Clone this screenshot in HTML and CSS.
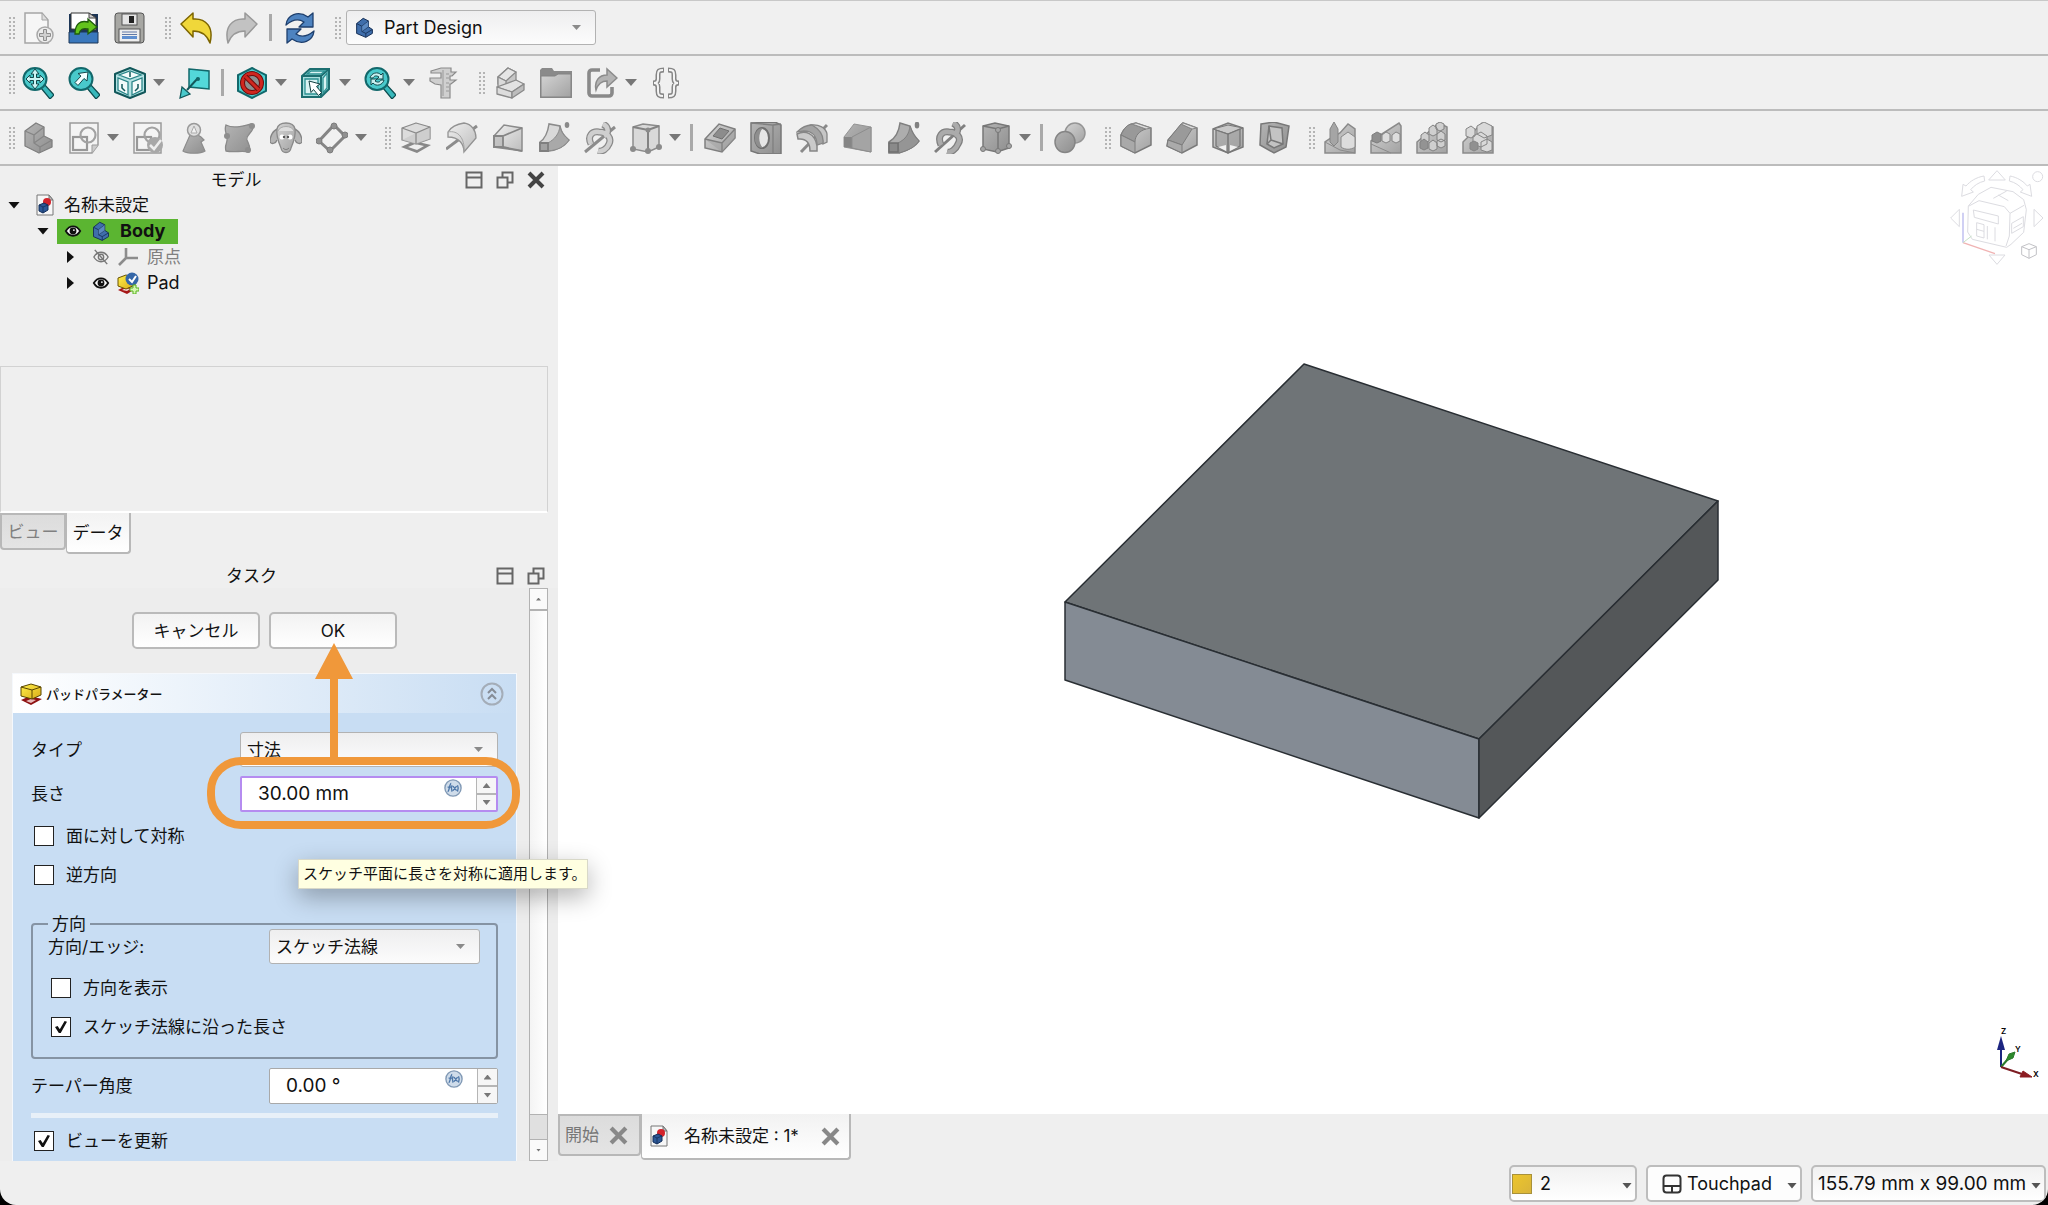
FILE: index.html
```html
<!DOCTYPE html>
<html lang="ja">
<head>
<meta charset="utf-8">
<title>名称未設定 - Part Design</title>
<link rel="stylesheet" href="styles.css">
</head>
<body>
<svg class="sprite" aria-hidden="true">
  <defs>
    <linearGradient id="g-gray" x1="0" y1="0" x2="1" y2="1"><stop offset="0" stop-color="#d4d4d4"/><stop offset="1" stop-color="#a2a2a2"/></linearGradient>
    <linearGradient id="g-light" x1="0" y1="0" x2="1" y2="1"><stop offset="0" stop-color="#efefef"/><stop offset="1" stop-color="#bdbdbd"/></linearGradient>
    <linearGradient id="g-dark" x1="0" y1="0" x2="1" y2="1"><stop offset="0" stop-color="#b4b4b4"/><stop offset="1" stop-color="#8f8f8f"/></linearGradient>
    <linearGradient id="g-yellow" x1="0" y1="0" x2="1" y2="1"><stop offset="0" stop-color="#fff04a"/><stop offset="1" stop-color="#d9ab18"/></linearGradient>
  </defs>

  <symbol id="i-new" viewBox="0 0 32 32"><path d="M3 1h17l6 7v23H3z" fill="#f6f6f6" stroke="#a5a5a5" stroke-width="1.500"/><path d="M20 1v7h6z" fill="#ddd" stroke="#a5a5a5"/><circle cx="23" cy="23" r="8" fill="#ececec" stroke="#a8a8a8" stroke-width="1.500"/><path d="M21.500 17.500h3v4h4v3h-4v4h-3v-4h-4v-3h4z" fill="#d0d0d0" stroke="#8e8e8e"/></symbol>
  <symbol id="i-open" viewBox="0 0 32 32"><path d="M1 2h29v29H1z" fill="#1d3657"/><path d="M3 17V1h18l7 5v12z" fill="#fff" stroke="#333"/><path d="M21 1v5h7z" fill="#ccc" stroke="#444"/><path d="M1 20h29v11H1z" fill="#3a78bd" stroke="#1d3657"/><path d="M7 22C7 12 12 8 20 10V7l9 8-9 7v-5c-5-1-8 0-9 5z" fill="#63c31c" stroke="#1f5c0b" stroke-width="1.300"/></symbol>
  <symbol id="i-save" viewBox="0 0 32 32"><rect x="1" y="1" width="29" height="30" rx="3" fill="#a7a7a3" stroke="#555"/><rect x="8" y="2" width="15" height="11" fill="#e4e4e4" stroke="#555"/><rect x="15" y="4" width="5" height="7" fill="#222"/><rect x="5" y="17" width="21" height="13" fill="#eee" stroke="#555"/><path d="M8 20h15M8 22.500h15" stroke="#6079a8" stroke-width="1.200"/><path d="M8 24h15v3H8z" fill="#5f8fd0"/></symbol>
  <symbol id="i-undo" viewBox="0 0 32 32"><path d="M1 12 13 1v6c13-1 21 8 17 24-3-8-8-12-17-12v6z" fill="#f0d73a" stroke="#7d6500" stroke-width="1.500" stroke-linejoin="round"/></symbol>
  <symbol id="i-redo" viewBox="0 0 32 32"><path d="M31 12 19 1v6C6 6-2 15 2 31c3-8 8-12 17-12v6z" fill="#c2c2c2" stroke="#999" stroke-width="1.500" stroke-linejoin="round"/></symbol>
  <symbol id="i-refresh" viewBox="0 0 32 32"><path d="M2 13C3 3 14-2 24 5l5-4v14H15l5-5C14 6 8 8 2 13z" fill="#4e83c0" stroke="#1e3f6d" stroke-width="1.300" stroke-linejoin="round"/><path d="M30 19C29 29 18 34 8 27l-5 4V17h14l-5 5c6 4 12 2 18-3z" fill="#4e83c0" stroke="#1e3f6d" stroke-width="1.300" stroke-linejoin="round"/></symbol>

  <symbol id="i-body" viewBox="0 0 32 32"><path d="M4 10 14 2l8 4v9l6 4v6L18 31 4 25z" fill="#3f6eab" stroke="#152f55" stroke-width="1.500" stroke-linejoin="round"/><path d="m4 10 8 4v8l6 3 10-6M12 14l10-8M12 22l10-7M18 25v6" fill="none" stroke="#152f55" stroke-width="1.300"/><path d="m12 14 10-8v9l-10 7z" fill="#78a3d8" fill-opacity=".5"/></symbol>
  <symbol id="i-body-gray" viewBox="0 0 32 32"><path d="M3 9 14 1l8 4v9l8 4v7L17 31 3 24z" fill="url(#g-dark)" stroke="#7f7f7f" stroke-width="1.300" stroke-linejoin="round"/><path d="m3 9 9 4v8l6 4 12-7M12 13l10-8M12 21l10-7M18 25v6" fill="none" stroke="#858585" stroke-width="1.300"/></symbol>
  <symbol id="i-part-gray" viewBox="0 0 32 32"><g stroke="#8a8a8a" stroke-width="1.300" stroke-linejoin="round"><path d="M4 10 14 1l8 4v9l-10 6-8-3z" fill="#c6c6c6"/><path d="m4 10 10-9 8 4-10 9z" fill="#e6e6e6"/><path d="M4 10v10l8 2v-8z" fill="#dadada"/><path d="m3 20 19-7 8 4-12 8z" fill="#e2e2e2"/><path d="m3 20 15 5v6L3 27z" fill="#dcdcdc"/><path d="m18 25 12-8v6l-12 8z" fill="#bdbdbd"/></g></symbol>

  <symbol id="i-fit" viewBox="0 0 32 32"><path d="m19 21 4-3 9 10-4 4z" fill="#38b8bb" stroke="#0e4d50" stroke-width="1.200"/><ellipse cx="13" cy="12" rx="11.500" ry="11" fill="#49c9cb" stroke="#12686b" stroke-width="2"/><path d="m13 2 4 5h-2.500v3.500H18V8l4 4-4 4v-2.500h-3.500V17H17l-4 5-4-5h2.500v-3.500H8V16l-4-4 4-4v2.500h3.500V7H9z" fill="#cdf4f4" stroke="#12484b"/></symbol>
  <symbol id="i-fitsel" viewBox="0 0 32 32"><path d="m19 21 4-3 9 10-4 4z" fill="#38b8bb" stroke="#0e4d50" stroke-width="1.200"/><ellipse cx="13" cy="12" rx="11.500" ry="11" fill="#49c9cb" stroke="#12686b" stroke-width="2"/><path d="m20 5-1 9-3-2.500-6 7-3-3 6-6.500-3-2.500z" fill="#f2ffff" stroke="#12484b"/></symbol>
  <symbol id="i-cube" viewBox="0 0 32 32"><path d="M1 7 16 1l15 6v18l-15 6-15-6z" fill="#b5e3e4" stroke="#12585b" stroke-width="2" stroke-linejoin="round"/><path d="m5 8 11 4 11-4-11-4zM4 11v12l10 5V15zM28 11v12l-10 5V15z" fill="#f3fbfb" stroke="#2a8588" stroke-width="1.300"/><path d="M16 5v5M8 17v4l3 3M24 17v4l-3 3" fill="none" stroke="#12585b" stroke-width="1.500"/></symbol>
  <symbol id="i-align" viewBox="0 0 32 32"><path d="m11 2 20 2v18l-20-2z" fill="#53d8da" stroke="#12686b" stroke-width="1.500"/><path d="m20 11-11 12" stroke="#12585b" stroke-width="2"/><path d="m2 31 2-11 8 7z" fill="#49c9cb" stroke="#12585b" stroke-width="1.300"/><circle cx="20" cy="12" r="2" fill="#12686b"/></symbol>
  <symbol id="i-drawstyle" viewBox="0 0 32 32"><path d="m16 1 14 7v16l-14 7-14-7V8z" fill="#4fd0d2" stroke="#12686b" stroke-width="2"/><circle cx="16" cy="16" r="9.500" fill="#8c8f8f" stroke="#6d0d0d" stroke-width="5"/><circle cx="16" cy="16" r="9.500" fill="none" stroke="#d0261f" stroke-width="3"/><path d="m9.500 9.500 13 13" stroke="#6d0d0d" stroke-width="5"/><path d="m9.500 9.500 13 13" stroke="#d0261f" stroke-width="3"/></symbol>
  <symbol id="i-bbox" viewBox="0 0 32 32"><path d="M2 9 10 2h19v20l-8 8H2z" fill="#a9dede" stroke="#1c6e70" stroke-width="2"/><path d="M2 9h19v21M21 9l8-7" fill="none" stroke="#1c6e70" stroke-width="2"/><path d="M5 12h13v15H5zM23 11l4-5v15l-4 5zM11 4h14l-4 3H7z" fill="#d9f3f3" stroke="#2b9193" stroke-width="1.300"/><path d="m9 14 11 3-3.500 2.500 5 6-3 3-5-6-2.500 3z" fill="#fff" stroke="#123f41"/></symbol>
  <symbol id="i-view" viewBox="0 0 32 32"><path d="m19 21 4-3 9 10-4 4z" fill="#38b8bb" stroke="#0e4d50" stroke-width="1.200"/><ellipse cx="13" cy="12" rx="11.500" ry="11" fill="#49c9cb" stroke="#12686b" stroke-width="2"/><path d="M6 11c1-5 8-7 11-3l2-2v6h-6l2-2c-3-2-5-1-6 1zM20 13c-1 5-8 7-11 3l-2 2v-6h6l-2 2c3 2 5 1 6-1z" fill="#c8f0f0" stroke="#12484b"/></symbol>
  <symbol id="i-caliper" viewBox="0 0 32 32"><path d="M3 4 13 1h10v4h5l-4 4h-2v4h6l-5 4h-1v14h-9V18l-6-1-5-3v-3h11V6H3z" fill="#cfcfcf" stroke="#8a8a8a" stroke-width="1.200"/><path d="M15 3v26M18 7h3M18 11h3M18 16h3M18 20h3M18 24h3" stroke="#999"/></symbol>
  <symbol id="i-folder" viewBox="0 0 32 32"><path d="M0 31V3l2-2h10l2 3h18v27z" fill="#8a8a8a"/><path d="M1 9h14l3-2h13v23H1z" fill="url(#g-gray)" stroke="#838383"/></symbol>
  <symbol id="i-link" viewBox="0 0 32 32"><path d="M14 3H6a3 3 0 0 0-3 3v20a3 3 0 0 0 3 3h17a3 3 0 0 0 3-3v-6" fill="none" stroke="#898989" stroke-width="3.600"/><path d="M10 23C8 14 13 8 21 8V2l10 9-10 9v-6c-5 0-9 3-11 9z" fill="#b3b3b3" stroke="#8b8b8b" stroke-width="1.500"/></symbol>
  <symbol id="i-braces" viewBox="0 0 32 32"><g fill="none" stroke="#858585" stroke-width="5"><path d="M14 3c-5 0-6 1-6 5v4c0 2-1 4-5 4 4 0 5 2 5 4v4c0 4 1 5 6 5M18 3c5 0 6 1 6 5v4c0 2 1 4 5 4-4 0-5 2-5 4v4c0 4-1 5-6 5"/></g><g fill="none" stroke="#f4f4f4" stroke-width="2"><path d="M13 3c-4 0-5 1-5 5v4c0 2-1 4-4 4 3 0 4 2 4 4v4c0 4 1 5 5 5M19 3c4 0 5 1 5 5v4c0 2 1 4 4 4-3 0-4 2-4 4v4c0 4-1 5-5 5"/></g></symbol>

  <symbol id="i-sketch" viewBox="0 0 32 32"><path d="M2 1h28v22l-6 8H2z" fill="#f4f4f4" stroke="#9b9b9b" stroke-width="1.500"/><path d="M30 23h-6v8" fill="#ccc" stroke="#9b9b9b"/><rect x="5" y="15" width="14" height="13" fill="none" stroke="#989898" stroke-width="2.200"/><circle cx="20" cy="13" r="7.500" fill="none" stroke="#a2a2a2" stroke-width="2.200"/></symbol>
  <symbol id="i-sketch-ok" viewBox="0 0 32 32"><path d="M2 1h27v30H2z" fill="#f4f4f4" stroke="#9b9b9b" stroke-width="1.500"/><rect x="5" y="15" width="14" height="13" fill="none" stroke="#989898" stroke-width="2.200"/><circle cx="20" cy="13" r="7.500" fill="none" stroke="#a2a2a2" stroke-width="2.200"/><circle cx="23" cy="23" r="8" fill="#a8a8a8"/><path d="m18 23 4 4 7-9" fill="none" stroke="#eee" stroke-width="2.500"/></symbol>
  <symbol id="i-pawn" viewBox="0 0 32 32"><path d="M12 13h8l3 2 3 3-3 2 4 9c-4 3-18 3-22 0z" fill="url(#g-dark)" stroke="#8c8c8c" stroke-width="1.200"/><circle cx="16" cy="8" r="6.500" fill="#e0e0e0" stroke="#999" stroke-width="1.500"/><path d="m13 11 3-7 3 7z" fill="#f2f2f2" stroke="#aaa"/></symbol>
  <symbol id="i-shape" viewBox="0 0 32 32"><path d="M2 3c8 4 15 1 26-1 4 8-7 10-5 16 2 5 4 7 2 12-8-2-14 1-23-1-2-7 2-7 1-14C2 10 0 8 2 3z" fill="url(#g-dark)" stroke="#8a8a8a" stroke-width="1.300"/><circle cx="28" cy="4" r="3" fill="#8d8d8d"/><circle cx="3" cy="14" r="3" fill="#8d8d8d"/><circle cx="24" cy="28" r="3" fill="#8d8d8d"/></symbol>
  <symbol id="i-sheep" viewBox="0 0 32 32"><path d="M8 7C3 8 0 14 0 20c2 3 6 1 7-2M24 7c5 1 8 7 8 13-2 3-6 1-7-2" fill="#b5b5b5" stroke="#858585" stroke-width="1.300"/><path d="M7 7c1-5 6-6 9-6s8 1 9 6c1 8-2 14-4 19-1 6-9 6-10 0C9 21 6 15 7 7z" fill="url(#g-gray)" stroke="#8a8a8a" stroke-width="1.300"/><path d="M8 9c2-6 14-6 16 0" fill="#ddd" stroke="#aaa"/><circle cx="12" cy="15" r="2.500" fill="#fff"/><circle cx="20" cy="15" r="2.500" fill="#fff"/><circle cx="14" cy="15" r="1.200" fill="#555"/><circle cx="18" cy="15" r="1.200" fill="#555"/><path d="M13 26c2 2 4 2 6 0" fill="none" stroke="#777"/></symbol>
  <symbol id="i-datum" viewBox="0 0 32 32"><path d="M18 3 29 14 14 29 3 19z" fill="#f1f1f1" stroke="#858585" stroke-width="3"/><g fill="#919191" stroke="#7d7d7d"><circle cx="18" cy="4" r="3"/><circle cx="29" cy="13" r="3"/><circle cx="14" cy="28" r="3"/><circle cx="3" cy="19" r="3"/></g></symbol>
  <symbol id="i-pad-gray" viewBox="0 0 32 32"><path d="m1 25 13-6 17 4-14 8z" fill="#888"/><path d="m8 25 7-3 9 2-7 4z" fill="#eee"/><path d="M2 6 16 1l14 4v12l-14 5L2 18z" fill="#dcdcdc" stroke="#8a8a8a" stroke-width="1.300" stroke-linejoin="round"/><path d="m2 18 14 4 14-5V5l-14 6z" fill="#c4c4c4" fill-opacity=".6"/><path d="m2 6 14 5 14-6M16 11v11" fill="none" stroke="#8a8a8a" stroke-width="1.300"/></symbol>
  <symbol id="i-rev-gray" viewBox="0 0 32 32"><path d="m0 27 31-23" stroke="#8c8c8c" stroke-width="3"/><path d="M2 10C5 5 11 2 18 1c8 1 12 8 12 15l-12 14c0-8-5-15-16-15z" fill="url(#g-light)" stroke="#929292" stroke-width="1.300"/><path d="M2 10c10-2 17 6 16 20" fill="none" stroke="#a5a5a5"/></symbol>
  <symbol id="i-loft-gray" viewBox="0 0 32 32"><path d="M2 14 12 3l18 3v23L2 25z" fill="url(#g-light)" stroke="#8b8b8b" stroke-width="1.500"/><path d="M2 14h9v11H2zM11 14 30 6M11 25l19 4" fill="#aaa" fill-opacity=".5" stroke="#858585" stroke-width="1.800"/></symbol>
  <symbol id="i-pipe-gray" viewBox="0 0 32 32"><path d="M2 20C8 16 10 9 11 2l11 2c1 6 4 10 9 14-5 7-11 10-21 11l-8-1z" fill="#d9d9d9" stroke="#8b8b8b" stroke-width="1.500"/><path d="M10 21c7-4 11-9 12-17 1 6 4 10 9 14-5 7-11 10-21 11z" fill="#a9a9a9" stroke="#8b8b8b"/><path d="M2 21h8v8H2z" fill="#a2a2a2" stroke="#7f7f7f" stroke-width="1.800"/><ellipse cx="29" cy="3" rx="2.300" ry="3" fill="#8a8a8a"/></symbol>
  <symbol id="i-helix-gray" viewBox="0 0 32 32"><path d="M1 30 31 5" stroke="#8c8c8c" stroke-width="3"/><g fill="none"><path d="M19 2c6 3 6 9 1 12M7 22C3 14 8 9 15 10c8 0 13 6 10 12-2 5-7 8-11 7" stroke="#8a8a8a" stroke-width="7"/><path d="M19 2c6 3 6 9 1 12M7 22C3 14 8 9 15 10c8 0 13 6 10 12-2 5-7 8-11 7" stroke="#cfcfcf" stroke-width="4.500"/></g></symbol>
  <symbol id="i-prim-gray" viewBox="0 0 32 32"><path d="M3 5 13 2l16 2v21l-11 5L3 27z" fill="#d9d9d9" stroke="#8b8b8b" stroke-width="1.500"/><path d="m3 5 15 3 11-4M18 8v21" fill="none" stroke="#838383" stroke-width="2"/><g fill="#8b8b8b"><circle cx="18" cy="8" r="2.500"/><circle cx="3" cy="27" r="3"/><circle cx="18" cy="29" r="3"/><circle cx="29" cy="25" r="3"/></g></symbol>

  <symbol id="i-pocket" viewBox="0 0 32 32"><path d="M1 17 15 2l16 5v9L18 30 1 26z" fill="url(#g-gray)" stroke="#7f7f7f" stroke-width="1.500"/><path d="m1 17 17 4L31 7v9L18 30z" fill="#a0a0a0" fill-opacity=".5"/><path d="m1 17 17 4L31 7M18 21v9" fill="none" stroke="#7f7f7f" stroke-width="1.300"/><path d="m9 14 7-8 9 3-7 8z" fill="#8c8c8c" stroke="#6f6f6f"/></symbol>
  <symbol id="i-hole" viewBox="0 0 32 32"><path d="m1 1 24-1 6 3v29H10L1 29z" fill="url(#g-dark)" stroke="#777" stroke-width="1.500"/><path d="m1 1 22 2v28M23 3l8-1" fill="none" stroke="#7f7f7f" stroke-width="1.300"/><ellipse cx="12" cy="16" rx="7" ry="10" fill="#e6e6e6" stroke="#6f6f6f" stroke-width="2"/><path d="M13 6c-5 5-5 15 0 20-11 0-11-20 0-20z" fill="#8e8e8e"/></symbol>
  <symbol id="i-groove" viewBox="0 0 32 32"><path d="m5 30 26-27" stroke="#8a8a8a" stroke-width="3"/><path d="M15 3c8-1 15 3 16 9v8l-4 2c0-8-4-14-12-19z" fill="#c6c6c6" stroke="#868686" stroke-width="1.300"/><path d="M1 10C6 5 12 3 16 3c7 4 12 10 11 18l-6 2C21 14 16 9 8 9z" fill="#a3a3a3" stroke="#868686" stroke-width="1.300"/><path d="M1 12c8-4 18-1 20 12v5h-7c0-7-3-13-12-12z" fill="#cacaca" stroke="#868686" stroke-width="1.500"/></symbol>
  <symbol id="i-loft" viewBox="0 0 32 32"><path d="M2 15 12 2l17 3v25L2 25z" fill="url(#g-dark)" stroke="#949494"/><path d="M2 15h8v11l-8-1z" fill="#858585"/><path d="M10 15 29 5v25l-19-4z" fill="#a4a4a4" stroke="#8d8d8d"/></symbol>
  <symbol id="i-pipe" viewBox="0 0 32 32"><path d="M1 20C8 16 11 9 12 1l10 3c2 7 5 11 9 15-4 6-10 9-20 12H1z" fill="#adadad" stroke="#7f7f7f" stroke-width="1.500"/><path d="M10 21c8-4 11-9 12-17 2 7 5 11 9 15-4 6-10 9-20 12z" fill="#959595" stroke="#7f7f7f"/><path d="M1 21h9v9H1z" fill="#8a8a8a" stroke="#707070" stroke-width="1.500"/><ellipse cx="29" cy="3" rx="2.300" ry="3.500" fill="#808080"/></symbol>
  <symbol id="i-helix" viewBox="0 0 32 32"><path d="M1 30 31 3" stroke="#808080" stroke-width="3"/><g fill="none"><path d="M19 1c6 3 6 9 1 12M7 23C3 14 8 9 15 10c8 0 13 6 9 12-2 5-7 9-11 8" stroke="#7f7f7f" stroke-width="7"/><path d="M19 1c6 3 6 9 1 12M7 23C3 14 8 9 15 10c8 0 13 6 9 12-2 5-7 9-11 8" stroke="#ababab" stroke-width="4.500"/></g></symbol>
  <symbol id="i-prim" viewBox="0 0 32 32"><path d="m3 4 12-3 14 3v22l-12 4-14-3z" fill="url(#g-dark)" stroke="#777" stroke-width="1.500"/><path d="m3 4 15 3 11-3M18 7v23" fill="none" stroke="#777" stroke-width="1.500"/><g fill="#a5a5a5" stroke="#777"><circle cx="18" cy="8" r="2.500"/><circle cx="3" cy="27" r="2.500"/><circle cx="18" cy="29" r="2.500"/><circle cx="29" cy="24" r="2.500"/></g></symbol>
  <symbol id="i-bool" viewBox="0 0 32 32"><ellipse cx="21" cy="11" rx="10" ry="10" fill="url(#g-gray)" stroke="#959595" stroke-width="1.500"/><ellipse cx="11" cy="20" rx="10" ry="10.500" fill="url(#g-dark)" stroke="#858585" stroke-width="1.500"/></symbol>
  <symbol id="i-fillet" viewBox="0 0 32 32"><path d="M1 24V13C4 6 9 2 16 1l15 5v17L15 31z" fill="url(#g-gray)" stroke="#7a7a7a" stroke-width="1.500"/><path d="M1 13C4 6 8 2 12 2l14 5c-7 2-11 7-11 13z" fill="#999" stroke="#7c7c7c"/><path d="m1 13 14 7v11L1 24z" fill="#a9a9a9" stroke="#7c7c7c"/><path d="m12 2 4-1 15 5-5 1z" fill="#ddd" stroke="#888"/></symbol>
  <symbol id="i-chamfer" viewBox="0 0 32 32"><path d="m1 24 1-6L17 1l14 5v17L16 31z" fill="url(#g-gray)" stroke="#7a7a7a" stroke-width="1.500"/><path d="M2 18 15 2l11 5-10 16z" fill="#9a9a9a" stroke="#7c7c7c"/><path d="m2 18 14 5v8L1 24z" fill="#aaa" stroke="#7c7c7c"/><path d="m15 2 2-1 14 5-5 1z" fill="#ddd" stroke="#888"/></symbol>
  <symbol id="i-draft" viewBox="0 0 32 32"><path d="M1 7 16 1l15 5v19l-15 6-15-6z" fill="url(#g-gray)" stroke="#7a7a7a" stroke-width="1.500"/><path d="m1 7 15 5 15-6-15-3z" fill="#c9c9c9" stroke="#777"/><path d="m4 8 12 4 12-5v17l-12 7-12-7z" fill="#a3a3a3" fill-opacity=".7" stroke="#777" stroke-width="1.300"/><path d="M16 12v19" stroke="#777" stroke-width="1.500"/><path d="m6 25 8-2v6zM26 25l-8-2v6z" fill="#f1f1f1"/></symbol>
  <symbol id="i-thick" viewBox="0 0 32 32"><path d="M3 2 16 0l15 4-3 21-12 6-14-8z" fill="url(#g-dark)" stroke="#787878" stroke-width="1.500"/><path d="M11 4 24 6l1 16-9 4-7-4z" fill="#c3c3c3" stroke="#777" stroke-width="1.500"/><path d="m11 4 2 14-4 4M13 18l12 4" fill="none" stroke="#777" stroke-width="1.500"/></symbol>
  <symbol id="i-mirror" viewBox="0 0 32 32"><path d="M1 31V20l6-4 9-5 8-9 7 5v24z" fill="url(#g-gray)" stroke="#8a8a8a" stroke-width="1.500"/><path d="M6 20V7l4-7 4 7v13l-4 4z" fill="#a5a5a5" stroke="#858585"/><path d="m17 15 7-5 7 5v10c-4 3-10 3-14 0z" fill="#ddd" stroke="#8a8a8a"/><path d="m1 20 15 8 15 3" fill="none" stroke="#8a8a8a"/></symbol>
  <symbol id="i-linear" viewBox="0 0 32 32"><path d="M1 31V19L29 1l2 3v27z" fill="url(#g-gray)" stroke="#8a8a8a" stroke-width="1.500"/><path d="m2 13 5-3 4 2v7l-4 2-5-2z" fill="#8f8f8f" stroke="#7d7d7d"/><path d="m12 13 4-3 4 2v7l-4 2-4-2zM22 13l4-3 4 2v7l-4 2-4-2z" fill="#ddd" stroke="#858585"/><path d="m1 22 20 9" stroke="#8a8a8a"/></symbol>
  <symbol id="i-polar" viewBox="0 0 32 32"><path d="M1 31V20L23 1l8 4v26z" fill="url(#g-gray)" stroke="#8a8a8a" stroke-width="1.500"/><g fill="#cfcfcf" stroke="#808080"><path d="m13 6 4-3 4 3v6l-4 2-4-2zM21 12l4-3 4 3v6l-4 2-4-2zM20 2l4-2 4 2v5l-4 2-4-2zM5 13l4-3 4 3v6l-4 2-4-2zM13 21l4-3 4 3v6l-4 2-4-2zM21 19l4-2 4 2v5l-4 2-4-2z"/><path d="m4 20 4-3 4 3v6l-4 2-4-2z" fill="#939393"/></g></symbol>
  <symbol id="i-multi" viewBox="0 0 32 32"><path d="M1 31V20L20 1l11 4v26z" fill="url(#g-gray)" stroke="#8a8a8a" stroke-width="1.500"/><g fill="#d9d9d9" stroke="#858585"><path d="m4 7 5-3 4 3v7l-4 2-5-2zM15 4l7-4 8 4v9l-8 3-7-4zM11 14l8-4 6 4v8l-6 3-8-3zM19 20l6-3 5 3v8l-5 2-6-2z"/><path d="m8 21 4-2 4 2v6l-4 2-4-2z" fill="#909090"/></g></symbol>

  <symbol id="i-doc" viewBox="0 0 18 22"><path d="M1 1h12l4 5v15H1z" fill="#f7f7f7" stroke="#777"/><path d="M13 1v5h4z" fill="#bbb" stroke="#777"/><circle cx="11" cy="8" r="4" fill="#d4232b"/><path d="m3 11 5-2 4 2v5l-5 3-4-2z" fill="#2d5896" stroke="#132e59"/><path d="m3 11 4 2 5-2M7 13v6" fill="none" stroke="#132e59" stroke-width=".8"/></symbol>
  <symbol id="i-eye" viewBox="0 0 20 14"><path d="M2 7c4-7 12-7 16 0-4 7-12 7-16 0z" fill="#fff" stroke="currentColor" stroke-width="2"/><circle cx="10" cy="7" r="3.800" fill="currentColor"/><circle cx="11" cy="6" r="1" fill="#fff"/></symbol>
  <symbol id="i-eye-off" viewBox="0 0 20 18"><path d="M2 9c4-7 12-7 16 0-4 7-12 7-16 0z" fill="none" stroke="#777" stroke-width="1.600"/><circle cx="10" cy="9" r="3" fill="none" stroke="#777" stroke-width="1.600"/><path d="m3 1 14 16" stroke="#777" stroke-width="1.600"/></symbol>
  <symbol id="i-axes" viewBox="0 0 22 20"><path d="M9 1v10h12M9 11l-7 7" fill="none" stroke="#8c8c8c" stroke-width="2.600"/></symbol>
  <symbol id="i-pad" viewBox="0 0 22 22"><path d="m1 17 9-4 12 3-11 6z" fill="#8e1212"/><path d="m6 18 5-2 5 1-5 3z" fill="#e7b9b9"/><path d="m1 4 10-3 10 3v8l-9 4-11-3z" fill="url(#g-yellow)" stroke="#5a4600" stroke-linejoin="round"/><path d="m1 4 11 3 9-3M12 7v9" fill="none" stroke="#5a4600"/></symbol>
  <symbol id="i-pad-tree" viewBox="0 0 22 22"><path d="m1 18 8-4 9 3-8 5z" fill="#a51616"/><path d="m5 18 4-2 4 1-3 2z" fill="#f3d3d3"/><path d="m1 6 8-3 9 3v7l-9 4-8-3z" fill="url(#g-yellow)" stroke="#6a5300"/><circle cx="15" cy="7" r="6.500" fill="#3567a8"/><path d="m12 7 3 3 4-6" fill="none" stroke="#fff" stroke-width="2"/><path d="M16 13h3v3h3v3h-3v3h-3v-3h-3v-3h3z" fill="#d6f7b2" stroke="#57b41d"/></symbol>
  <symbol id="i-shade" viewBox="0 0 18 18"><path d="M1.500 1.500h15v15h-15zM1.500 6.500h15" fill="none" stroke="#666" stroke-width="2"/></symbol>
  <symbol id="i-float" viewBox="0 0 18 18"><path d="M6.500 6V1.500h10v10H12" fill="none" stroke="#666" stroke-width="2"/><path d="M1.500 6.500h10v10h-10z" fill="none" stroke="#666" stroke-width="2"/></symbol>
  <symbol id="i-x" viewBox="0 0 18 18"><path d="m2 2 14 14M16 2 2 16" stroke="currentColor" stroke-width="4"/></symbol>
  <symbol id="i-fx" viewBox="0 0 20 20"><circle cx="10" cy="10" r="9" fill="#cfdcea" stroke="#8199b5" stroke-width="1.500"/><path d="M8 5c-2 0-2 9-4 9M4 9h4M9 7c-1 2-1 5 0 7M10 8l4 5M14 8l-4 5M15 7c1 2 1 5 0 7" fill="none" stroke="#4c76a8" stroke-width="1.500"/></symbol>
</svg>

<div class="app">
  <header class="toolbars">
    <div class="toolbar" role="toolbar" aria-label="ファイル">
      <span class="grip first"></span>
      <button class="tool" aria-label="新規"><svg><use href="#i-new"/></svg></button>
      <button class="tool" aria-label="開く"><svg><use href="#i-open"/></svg></button>
      <button class="tool" aria-label="保存"><svg><use href="#i-save"/></svg></button>
      <span class="grip"></span>
      <button class="tool" aria-label="元に戻す"><svg><use href="#i-undo"/></svg></button>
      <button class="tool" aria-label="やり直す"><svg><use href="#i-redo"/></svg></button>
      <span class="sep"></span>
      <button class="tool" aria-label="更新"><svg><use href="#i-refresh"/></svg></button>
      <span class="grip"></span>
      <div class="combo workbench">
        <svg class="combo-icon" aria-hidden="true"><use href="#i-body"/></svg>
        <select aria-label="ワークベンチ"><option>Part Design</option></select>
      </div>
    </div>
    <div class="toolbar" role="toolbar" aria-label="ビュー">
      <span class="grip first"></span>
      <button class="tool" aria-label="全てにフィット"><svg><use href="#i-fit"/></svg></button>
      <button class="tool" aria-label="選択にフィット"><svg><use href="#i-fitsel"/></svg></button>
      <button class="tool" aria-label="等角投影"><svg><use href="#i-cube"/></svg></button>
      <button class="drop" aria-label="ビューの選択"></button>
      <button class="tool" aria-label="面に整列"><svg><use href="#i-align"/></svg></button>
      <span class="sep"></span>
      <button class="tool" aria-label="描画スタイル"><svg><use href="#i-drawstyle"/></svg></button>
      <button class="drop" aria-label="描画スタイルの選択"></button>
      <button class="tool" aria-label="選択"><svg><use href="#i-bbox"/></svg></button>
      <button class="drop" aria-label="選択の種類"></button>
      <button class="tool" aria-label="同期"><svg><use href="#i-view"/></svg></button>
      <button class="drop" aria-label="同期の種類"></button>
      <button class="tool" aria-label="計測"><svg><use href="#i-caliper"/></svg></button>
      <span class="grip"></span>
      <button class="tool" aria-label="パーツ"><svg><use href="#i-part-gray"/></svg></button>
      <button class="tool" aria-label="グループ"><svg><use href="#i-folder"/></svg></button>
      <button class="tool" aria-label="リンク"><svg><use href="#i-link"/></svg></button>
      <button class="drop" aria-label="リンクの種類"></button>
      <button class="tool" aria-label="変数"><svg><use href="#i-braces"/></svg></button>
    </div>
    <div class="toolbar dense" role="toolbar" aria-label="パートデザイン">
      <span class="grip first"></span>
      <button class="tool" aria-label="ボディー"><svg><use href="#i-body-gray"/></svg></button>
      <button class="tool" aria-label="スケッチ"><svg><use href="#i-sketch"/></svg></button>
      <button class="drop" aria-label="スケッチの種類"></button>
      <button class="tool" aria-label="検証"><svg><use href="#i-sketch-ok"/></svg></button>
      <button class="tool" aria-label="チェック"><svg><use href="#i-pawn"/></svg></button>
      <button class="tool" aria-label="シェイプバインダー"><svg><use href="#i-shape"/></svg></button>
      <button class="tool" aria-label="クローン"><svg><use href="#i-sheep"/></svg></button>
      <button class="tool" aria-label="データム"><svg><use href="#i-datum"/></svg></button>
      <button class="drop" aria-label="データムの種類"></button>
      <span class="grip"></span>
      <button class="tool" aria-label="パッド"><svg><use href="#i-pad-gray"/></svg></button>
      <button class="tool" aria-label="回転押し出し"><svg><use href="#i-rev-gray"/></svg></button>
      <button class="tool" aria-label="加算ロフト"><svg><use href="#i-loft-gray"/></svg></button>
      <button class="tool" aria-label="加算パイプ"><svg><use href="#i-pipe-gray"/></svg></button>
      <button class="tool" aria-label="加算らせん"><svg><use href="#i-helix-gray"/></svg></button>
      <button class="tool" aria-label="加算プリミティブ"><svg><use href="#i-prim-gray"/></svg></button>
      <button class="drop" aria-label="加算プリミティブの種類"></button>
      <span class="sep"></span>
      <button class="tool" aria-label="ポケット"><svg><use href="#i-pocket"/></svg></button>
      <button class="tool" aria-label="ホール"><svg><use href="#i-hole"/></svg></button>
      <button class="tool" aria-label="グルーブ"><svg><use href="#i-groove"/></svg></button>
      <button class="tool" aria-label="減算ロフト"><svg><use href="#i-loft"/></svg></button>
      <button class="tool" aria-label="減算パイプ"><svg><use href="#i-pipe"/></svg></button>
      <button class="tool" aria-label="減算らせん"><svg><use href="#i-helix"/></svg></button>
      <button class="tool" aria-label="減算プリミティブ"><svg><use href="#i-prim"/></svg></button>
      <button class="drop" aria-label="減算プリミティブの種類"></button>
      <span class="sep"></span>
      <button class="tool" aria-label="ブーリアン"><svg><use href="#i-bool"/></svg></button>
      <span class="grip"></span>
      <button class="tool" aria-label="フィレット"><svg><use href="#i-fillet"/></svg></button>
      <button class="tool" aria-label="面取り"><svg><use href="#i-chamfer"/></svg></button>
      <button class="tool" aria-label="抜き勾配"><svg><use href="#i-draft"/></svg></button>
      <button class="tool" aria-label="厚み"><svg><use href="#i-thick"/></svg></button>
      <span class="grip"></span>
      <button class="tool" aria-label="鏡像"><svg><use href="#i-mirror"/></svg></button>
      <button class="tool" aria-label="直線状パターン"><svg><use href="#i-linear"/></svg></button>
      <button class="tool" aria-label="円状パターン"><svg><use href="#i-polar"/></svg></button>
      <button class="tool" aria-label="マルチ変換"><svg><use href="#i-multi"/></svg></button>
    </div>
  </header>

  <div class="main">
    <aside class="sidebar">
      <section class="model">
        <div class="dock-title">
          <h2>モデル</h2>
          <button aria-label="折りたたむ"><svg><use href="#i-shade"/></svg></button>
          <button aria-label="切り離す"><svg><use href="#i-float"/></svg></button>
          <button class="close" aria-label="閉じる"><svg><use href="#i-x"/></svg></button>
        </div>
        <ul class="tree">
          <li class="row level-0"><span class="caret open"></span><svg class="doc"><use href="#i-doc"/></svg><span>名称未設定</span></li>
          <li class="row level-1"><span class="caret open"></span><span class="active-body"><svg class="eye"><use href="#i-eye"/></svg><svg class="node"><use href="#i-body"/></svg><b>Body</b></span></li>
          <li class="row level-2 hidden-item"><span class="caret"></span><svg class="eye"><use href="#i-eye-off"/></svg><svg class="feature"><use href="#i-axes"/></svg><span>原点</span></li>
          <li class="row level-2"><span class="caret"></span><svg class="eye"><use href="#i-eye"/></svg><svg class="feature"><use href="#i-pad-tree"/></svg><span class="latin">Pad</span></li>
        </ul>
        <div class="properties"></div>
        <div class="tabs"><button class="tab">ビュー</button><button class="tab current">データ</button></div>
      </section>

      <section class="task">
        <div class="dock-title">
          <h2>タスク</h2>
          <button aria-label="折りたたむ"><svg><use href="#i-shade"/></svg></button>
          <button aria-label="切り離す"><svg><use href="#i-float"/></svg></button>
        </div>
        <div class="task-scroll">
          <div class="task-content">
            <div class="actions"><button class="push">キャンセル</button><button class="push">OK</button></div>
            <div class="group">
              <div class="group-head">
                <svg class="pad-icon"><use href="#i-pad"/></svg><h3>パッドパラメーター</h3>
                <button aria-label="折りたたむ"><svg viewBox="0 0 24 24"><circle cx="12" cy="12" r="10.500" fill="none" stroke="#a4adb8" stroke-width="2"/><path d="m8 11 4-4 4 4M8 17l4-4 4 4" fill="none" stroke="#858c96" stroke-width="2"/></svg></button>
              </div>
              <form class="group-body">
                <div class="field"><label for="type">タイプ</label><div class="combo wide"><select id="type"><option>寸法</option></select></div></div>
                <div class="field"><label for="length">長さ</label>
                  <div class="spin wide focus"><input id="length" type="text" value="30.00 mm"><svg><use href="#i-fx"/></svg><span class="steps"><button type="button" class="up" aria-label="増やす"></button><button type="button" class="down" aria-label="減らす"></button></span></div></div>
                <label class="check"><input type="checkbox"><span>面に対して対称</span></label>
                <label class="check"><input type="checkbox"><span>逆方向</span></label>
                <fieldset>
                  <legend>方向</legend>
                  <div class="field"><label for="edge">方向/エッジ:</label><div class="combo medium"><select id="edge"><option>スケッチ法線</option></select></div></div>
                  <label class="check"><input type="checkbox"><span>方向を表示</span></label>
                  <label class="check"><input type="checkbox" checked><span>スケッチ法線に沿った長さ</span></label>
                </fieldset>
                <div class="field"><label for="taper">テーパー角度</label>
                  <div class="spin narrow"><input id="taper" type="text" value="0.00 °"><svg><use href="#i-fx"/></svg><span class="steps"><button type="button" class="up" aria-label="増やす"></button><button type="button" class="down" aria-label="減らす"></button></span></div></div>
                <hr>
                <label class="check"><input type="checkbox" checked><span>ビューを更新</span></label>
              </form>
            </div>
          </div>
          <div class="scrollbar"><button class="up" aria-label="上へ"></button><span class="thumb"></span><span class="track"></span><button class="down" aria-label="下へ"></button></div>
        </div>
      </section>

      <svg class="callout" viewBox="0 0 313 186" aria-hidden="true"><rect x="4" y="118" width="305" height="64" rx="30" fill="none" stroke="#f0983a" stroke-width="8"/><path d="M123 122V36h-15L127 0l19 36h-15v86z" fill="#f0983a"/></svg>
      <div class="tooltip" role="tooltip">スケッチ平面に長さを対称に適用します。</div>
    </aside>

    <main class="workspace">
      <div class="canvas">
        <svg class="scene" viewBox="0 0 1490 948" preserveAspectRatio="xMinYMin meet" role="img" aria-label="Pad">
          <g stroke="#292e33" stroke-width="1.500" stroke-linejoin="round">
            <path d="M746 198 1160 335 921 573 507 436z" fill="#6f7477"/>
            <path d="M507 436 921 573V652L507 514z" fill="#848b94"/>
            <path d="M921 573 1160 335V414L921 652z" fill="#545759"/>
          </g>
        </svg>
        <svg class="nav-cube" viewBox="0 18 354 342" aria-hidden="true">
          <g fill="none" stroke="#dcdce1" stroke-width="3">
            <path d="m176 60 25-28 25 28zM177 285h48l-24 28zM88 148v52l-26-26zM312 148v52l27-26z"/>
            <path d="M162 48c-24 4-42 16-54 30l-9-5-4 36 35-13-8-7c10-12 24-22 42-26zM240 48c22 4 40 16 52 30l8-5 5 36-34-13 8-7c-10-12-24-22-41-26z"/>
            <circle cx="323" cy="50" r="15"/>
            <path d="m145 103 38-21 66 13 32 24 8 30-8 68-38 36-13 9-103-24-14-22 2-78zM117 138l30-16 76 18 17 20-2 68-10 30M240 160l42-24M130 150l75 18v24l-72-20zM190 115l40-22M205 105l30 17M140 188v40l22 6v-40zM140 208l22 6M172 198v40M195 202v42M245 190l35-20v30l-35 20zM250 205l26-15"/>
          </g>
          <path d="m275 260 22-9 22 9v24l-22 11-22-11zM275 260l22 9 22-9M297 269v26" fill="none" stroke="#c2c2c6" stroke-width="3"/>
          <path d="M99 158v90" stroke="#b9b9ee" stroke-width="4"/><path d="m99 248 96 33" stroke="#f0b3b3" stroke-width="4"/><path d="m99 248 26-20" stroke="#c7e3c7" stroke-width="3"/>
        </svg>
        <svg class="axis-cross" viewBox="0 0 60 60" role="img" aria-label="座標軸">
          <path d="M13 45V24" stroke="#1c2580" stroke-width="2"/><path d="m9 28 4-14 4 14z" fill="#1c2580"/>
          <path d="m13 45 7-8" stroke="#2c7a2c" stroke-width="2"/><path d="m18 39 3-7 6-2-2 6z" fill="#2c8a2c" stroke="#2c7a2c"/>
          <path d="m13 45 21 7" stroke="#7d1c22" stroke-width="2"/><path d="m32 55 3-6 9 6z" fill="#8c1c22" stroke="#8c1c22"/>
          <text x="13" y="12">Z</text><text x="27" y="30">Y</text><text x="45" y="55">X</text>
        </svg>
      </div>
      <div class="tabs doc-tabs">
        <button class="tab">開始<svg><use href="#i-x"/></svg></button>
        <button class="tab current"><svg class="doc"><use href="#i-doc"/></svg><span class="name">名称未設定 : 1*</span><svg><use href="#i-x"/></svg></button>
      </div>
    </main>
  </div>

  <footer class="status">
    <button class="status-button notices"><span class="swatch"></span>2</button>
    <button class="status-button nav"><svg viewBox="0 0 20 20"><rect x="1.500" y="1.500" width="17" height="17" rx="3" fill="none" stroke="#333" stroke-width="2"/><path d="M2 12h16M10 12v6" stroke="#333" stroke-width="2"/></svg>Touchpad</button>
    <button class="status-button size">155.79 mm x 99.00 mm</button>
  </footer>
</div>
</body>
</html>
```
FILE: styles.css
```css
* { box-sizing: border-box; }
body {
  margin: 0;
  background: #000;
  color: #111;
  font: 17px/24px Inter, "Noto Sans CJK JP", sans-serif;
}
button, input, select { font: inherit; color: inherit; }
button { padding: 0; border: 0; background: none; }
h2, h3 { margin: 0; font-size: 17px; font-weight: 400; }
svg { display: block; flex: none; }
.sprite { position: absolute; width: 0; height: 0; }

.app {
  display: flex;
  flex-direction: column;
  min-height: 100vh;
  background: #efefef;
  border-top: 1px solid #c8c8c8;
  border-radius: 0 0 16px 16px;
  overflow: hidden;
}

/* Toolbars */
.toolbar {
  display: flex;
  align-items: center;
  height: 55px;
  background: #f0f0f0;
  border-bottom: 2px solid #bcbcbc;
}
.tool { display: grid; place-items: center; width: 46px; height: 46px; }
.tool svg { width: 32px; height: 32px; }
.grip { width: 20px; height: 24px; padding-left: 11px; }
.grip::before {
  content: "";
  display: block;
  width: 8px;
  height: 24px;
  background: radial-gradient(circle, #b4b4b4 1px, transparent 1px) 0 0 / 4px 4px;
}
.grip.first { width: 15px; padding-left: 8px; }
.sep { width: 12px; padding-left: 4px; }
.sep::before { content: ""; display: block; width: 3px; height: 27px; background: #a9a9a9; }
.dense .sep { width: 10px; padding-left: 3px; }
.drop { width: 18px; height: 32px; }
.drop::before, .combo::after, .status-button::after, .up::before, .down::before {
  content: "";
  display: block;
  width: 12px;
  height: 7px;
  background: #777;
  clip-path: polygon(0 0, 100% 0, 50% 100%);
}

/* Combo boxes */
.combo {
  position: relative;
  height: 35px;
  border: 1px solid #b2b2b2;
  border-radius: 3px;
  background: linear-gradient(#eeeeef, #fcfcfc);
}
.combo select {
  appearance: none;
  width: 100%;
  height: 100%;
  padding: 0 32px 0 6px;
  border: 0;
  background: none;
}
.combo::after { position: absolute; right: 14px; top: 14px; width: 9px; height: 5px; background: #8a8a8a; }
.workbench { width: 250px; margin-left: 3px; }
.workbench select { padding-left: 37px; font-size: 18px; }
.combo-icon { position: absolute; left: 7px; top: 6px; width: 21px; height: 21px; }

/* Docks */
.main { display: flex; flex: 1; }
.sidebar { position: relative; z-index: 1; display: flex; flex-direction: column; width: 558px; }
.dock-title { display: flex; align-items: center; gap: 13px; height: 26px; padding: 1px 13px 0 20px; }
.dock-title h2 { flex: 1; text-align: center; }
.dock-title svg { width: 18px; height: 18px; }
.close { color: #444; }
.tree { margin: 0; padding: 0; height: 174px; list-style: none; }
.row { display: flex; align-items: center; height: 26px; }
.level-0 { padding-left: 8px; }
.level-1 { padding-left: 37px; }
.level-2 { padding-left: 64px; }
.caret { width: 28px; }
.level-1 .caret { width: 20px; }
.caret::before {
  content: "";
  display: block;
  width: 7px;
  height: 12px;
  margin-left: 3px;
  background: #111;
  clip-path: polygon(0 0, 100% 50%, 0 100%);
}
.caret.open::before { width: 12px; height: 7px; margin-left: 0; clip-path: polygon(0 0, 100% 0, 50% 100%); }
.doc { width: 18px; height: 22px; }
.row .doc { margin-right: 10px; }
.eye { width: 18px; height: 16px; }
.active-body { display: flex; align-items: center; height: 25px; padding: 0 13px 0 7px; background: #5bb531; }
.active-body .node { width: 20px; height: 22px; margin: 0 9px; }
.active-body b { font-weight: 700; font-size: 18px; }
.latin { font-size: 18px; }
.feature { width: 22px; height: 22px; margin: 0 8px 0 7px; }
.hidden-item { color: #808080; }
.properties { height: 147px; width: 548px; border: 1px solid #d2d2d2; border-bottom: 2px solid #fff; }

.tabs { display: flex; align-items: flex-start; }
.tab {
  display: flex;
  align-items: center;
  justify-content: center;
  width: 66px;
  height: 37px;
  border: 2px solid #b8b8b8;
  border-radius: 0 0 4px 4px;
  background: linear-gradient(#dcdcdc, #e4e4e4);
  color: #808080;
}
.tab.current {
  width: 65px;
  height: 41px;
  border-width: 0 2px 2px 1px;
  background: linear-gradient(#f2f2f2, #fff);
  color: #111;
}

/* Task panel */
.task { display: flex; flex: 1; flex-direction: column; margin-top: 8px; }
.task-scroll { display: flex; flex: 1; background: #ededed; }
.task-content { width: 529px; padding: 24px 12px 0; }
.actions { display: flex; justify-content: center; gap: 9px; }
.push {
  width: 128px;
  height: 37px;
  border: 2px solid #bababa;
  border-radius: 5px;
  background: linear-gradient(#f2f2f2, #fff);
}
.group { margin-top: 24px; border: 1px solid #f5f8fc; border-bottom: 0; background: #c8ddf3; }
.group-head { display: flex; align-items: center; height: 39px; padding: 0 12px 0 7px; background: linear-gradient(90deg, #fff, #c8ddf3); }
.group-head h3 { flex: 1; margin-left: 4px; font-size: 13px; font-weight: 500; }
.group-head button svg { width: 24px; height: 24px; }
.pad-icon { width: 22px; height: 22px; }
.group-body { padding: 19px 18px 10px; }
.field { display: flex; align-items: center; justify-content: space-between; }
.field + .field { margin-top: 9px; }
.wide { width: 258px; }
.medium { width: 211px; }
.narrow { width: 229px; }
.spin { display: flex; height: 36px; border: 1px solid #a9a9a9; border-radius: 2px; background: #fff; }
.spin.focus { border: 2px solid #b58cf0; }
.spin input { flex: 1; min-width: 0; padding: 0 0 0 16px; border: 0; background: none; outline: 0; font-size: 19px; }
.spin svg { width: 18px; height: 18px; margin: 1px 14px 0 0; }
.steps { display: flex; flex-direction: column; width: 20px; border-left: 1px solid #b5b5b5; }
.steps button { display: grid; flex: 1; place-items: center; background: #f6f6f6; }
.steps .down { border-top: 2px solid #b5b5b5; }
.up::before, .down::before { width: 8px; height: 5px; }
.up::before { clip-path: polygon(0 100%, 50% 0, 100% 100%); }
.check { display: flex; align-items: center; gap: 12px; height: 20px; margin: 19px 0 0 3px; }
.field + .check { margin-top: 14px; }
.check input {
  appearance: none;
  width: 20px;
  height: 20px;
  margin: 0;
  border: 1px solid #222;
  background: #fff;
}
.check input:checked::before {
  content: "";
  display: block;
  width: 12px;
  height: 12px;
  margin: 3px;
  background: #111;
  clip-path: polygon(0 50%, 22% 42%, 40% 68%, 80% 0, 100% 6%, 48% 100%, 32% 100%);
}
fieldset { margin: 34px 0 9px; padding: 0 16px 20px 15px; border: 2px solid #8593a3; border-radius: 4px; }
legend { height: 10px; padding: 0 4px; line-height: 10px; }
hr { height: 5px; margin: 9px 0 13px; border: 0; background: #e8f0f8; }
hr + .check { margin-top: 0; }

.scrollbar { display: flex; flex-direction: column; width: 19px; border: 1px solid #b2b2b2; background: #fafafa; }
.scrollbar button { display: grid; place-items: center; height: 20px; }
.scrollbar button::before { width: 5px; height: 3px; }
.scrollbar .thumb { flex: 1; border: solid #b2b2b2; border-width: 2px 0 1px; background: linear-gradient(90deg, #f4f4f4, #fff); }
.scrollbar .track { height: 25px; border-bottom: 1px solid #b2b2b2; background: #e0e0e0; }

/* Overlays */
.callout { position: absolute; left: 207px; top: 477px; width: 313px; height: 186px; }
.tooltip {
  position: absolute;
  left: 298px;
  top: 693px;
  height: 30px;
  padding-left: 4px;
  border: 1px solid #d8d8c8;
  background: #ffffe1;
  box-shadow: 0 8px 24px rgba(0, 0, 0, .3);
  font-size: 15px;
  line-height: 28px;
  white-space: nowrap;
}

/* 3D view */
.workspace { display: flex; flex: 1; flex-direction: column; min-width: 0; }
.canvas { position: relative; flex: 1; background: #fff; }
.scene { width: 100%; height: auto; }
.nav-cube { position: absolute; right: 0; top: 0; width: 118px; height: 114px; }
.axis-cross { position: absolute; right: 0; bottom: 32px; width: 60px; height: 60px; font-size: 8px; font-weight: 600; }
.doc-tabs { height: 47px; }
.doc-tabs .tab { justify-content: flex-start; gap: 10px; width: 83px; height: 42px; padding-left: 5px; color: #777; }
.doc-tabs .tab.current { width: 210px; height: 46px; padding: 0 9px 0 8px; color: #111; }
.doc-tabs .tab > svg:last-child { width: 19px; height: 19px; color: #888; }
.doc-tabs .name { flex: 1; padding-left: 6px; text-align: left; }

/* Status bar */
.status { display: flex; justify-content: flex-end; gap: 9px; height: 44px; padding: 4px 2px 3px 0; }
.status-button {
  display: flex;
  align-items: center;
  border: 2px solid #bdbdbd;
  border-radius: 5px;
  background: linear-gradient(#f1f1f1, #fff);
  font-size: 18px;
  white-space: nowrap;
}
.status-button::after { width: 10px; height: 6px; margin: 4px 3px 0 auto; background: #555; }
.notices { width: 128px; padding-left: 1px; gap: 8px; }
.nav { width: 156px; padding-left: 14px; gap: 5px; background: #fdfdfd; }
.nav svg { width: 20px; height: 20px; }
.size { width: 235px; padding-left: 5px; font-size: 19px; }
.swatch { width: 20px; height: 20px; border: 1px solid #a8913a; background: linear-gradient(135deg, #ecc52c, #d9b43a); }
```
